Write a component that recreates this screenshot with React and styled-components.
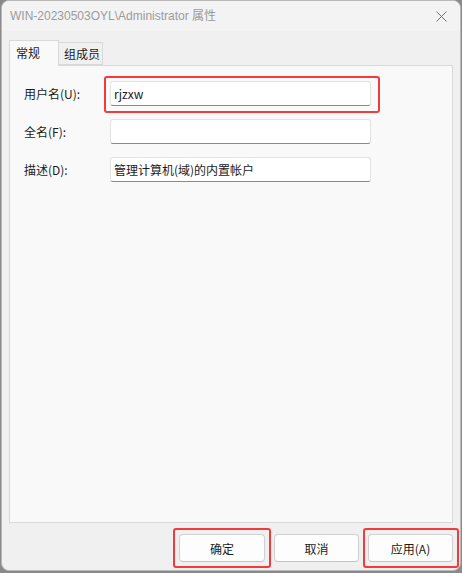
import React from 'react'
import styled, { createGlobalStyle } from 'styled-components'

const Global = createGlobalStyle`
  html, body {
    margin: 0;
    padding: 0;
    background: #8a8a8a;
  }
  body {
    font-family: "Noto Sans CJK SC", "Noto Sans", sans-serif;
    font-size: 12px;
    color: #1b1b1b;
  }
`

const Window = styled.div`
  box-sizing: border-box;
  width: 460px;
  height: 571px;
  margin-left: 1px;
  border: 1px solid #b9b9b9;
  border-radius: 8px;
  background: #f0f0f0;
  display: flex;
  flex-direction: column;
  overflow: hidden;
`

const TitleBar = styled.div`
  height: 30px;
  flex: none;
  display: flex;
  align-items: center;
  justify-content: space-between;
  padding: 0 9px 0 8px;
  background: #f3f3f3;
`

const Title = styled.span`
  color: #9b9b9b;
  font-family: "Liberation Sans", "Noto Sans CJK SC", sans-serif;
  font-size: 12px;
  line-height: 1;
`

const CloseBtn = styled.div`
  width: 20px;
  height: 20px;
  display: flex;
  align-items: center;
  justify-content: center;
`

const Body = styled.div`
  flex: 1;
  display: flex;
  flex-direction: column;
  padding: 9px 7px 0 7px;
`

const TabStrip = styled.div`
  display: flex;
  align-items: flex-end;
  height: 25px;
  flex: none;
  position: relative;
  z-index: 1;
`

const Tab = styled.div`
  box-sizing: border-box;
  width: ${p => p.$w}px;
  height: ${p => (p.$active ? 26 : 23)}px;
  margin-bottom: ${p => (p.$active ? -1 : 0)}px;
  padding-left: ${p => p.$pad}px;
  display: flex;
  align-items: center;
  border: 1px solid #d9d9d9;
  border-bottom: ${p => (p.$active ? 'none' : '1px solid #d9d9d9')};
  border-left: ${p => (p.$active ? '1px solid #d9d9d9' : 'none')};
  background: ${p => (p.$active ? '#f9f9f9' : '#f0f0f0')};
  color: #1b1b1b;
  padding-bottom: ${p => (p.$active ? 2 : 0)}px;
`

const Panel = styled.div`
  box-sizing: border-box;
  height: 458px;
  flex: none;
  background: #f9f9f9;
  border: 1px solid #d9d9d9;
  padding: 15px 0 0 14px;
  display: flex;
  flex-direction: column;
  gap: 13px;
`

const Row = styled.div`
  display: flex;
  align-items: center;
  height: 25px;
`

const Label = styled.label`
  width: 86px;
  flex: none;
  color: #1b1b1b;
`

const FieldWrap = styled.div`
  position: relative;
  width: 261px;
  height: 25px;
`

const Field = styled.div`
  box-sizing: border-box;
  width: 100%;
  height: 100%;
  background: #ffffff;
  border: 1px solid #e3e3e3;
  border-bottom: 1px solid #8a8a8a;
  border-radius: 3px;
  padding: 0 3px;
  display: flex;
  align-items: center;
  color: #1b1b1b;
`

const Mark = styled.div`
  position: absolute;
  top: ${p => p.$t}px;
  left: ${p => p.$l}px;
  right: ${p => p.$r}px;
  bottom: ${p => p.$b}px;
  border: 2px solid #f23b3b;
  border-radius: 3px;
  pointer-events: none;
`

const Footer = styled.div`
  flex: none;
  display: flex;
  justify-content: flex-end;
  gap: 9px;
  padding: 11px 0 8px 0;
`

const BtnWrap = styled.div`
  position: relative;
`

const Button = styled.button`
  box-sizing: border-box;
  width: ${p => p.$w}px;
  height: 28px;
  background: #fdfdfd;
  border: 1px solid #d0d0d0;
  border-bottom-color: #c4c4c4;
  border-radius: 4px;
  font-family: inherit;
  font-size: 12px;
  color: #1b1b1b;
  padding: 0;
`

const fields = [
  { label: '用户名(U):', value: 'rjzxw', mark: true },
  { label: '全名(F):', value: '' },
  { label: '描述(D):', value: '管理计算机(域)的内置帐户' },
]

export default function App() {
  return (
    <>
      <Global />
      <Window>
        <TitleBar>
          <Title>WIN-20230503OYL\Administrator 属性</Title>
          <CloseBtn>
            <svg width="11" height="11" viewBox="0 0 11 11">
              <path d="M0.5 0.5 L10.5 10.5 M10.5 0.5 L0.5 10.5" stroke="#6e6e6e" strokeWidth="1" fill="none" />
            </svg>
          </CloseBtn>
        </TitleBar>
        <Body>
          <TabStrip>
            <Tab $active $w={50} $pad={6}>常规</Tab>
            <Tab $w={44} $pad={5}>组成员</Tab>
          </TabStrip>
          <Panel>
            {fields.map(f => (
              <Row key={f.label}>
                <Label>{f.label}</Label>
                <FieldWrap>
                  <Field>{f.value}</Field>
                  {f.mark && <Mark $t={-5} $l={-6} $r={-9} $b={-7} />}
                </FieldWrap>
              </Row>
            ))}
          </Panel>
          <Footer>
            <BtnWrap>
              <Button $w={86}>确定</Button>
              <Mark $t={-6} $l={-6} $r={-6} $b={-6} />
            </BtnWrap>
            <BtnWrap>
              <Button $w={85}>取消</Button>
            </BtnWrap>
            <BtnWrap>
              <Button $w={85}>应用(A)</Button>
              <Mark $t={-6} $l={-5} $r={-6} $b={-6} />
            </BtnWrap>
          </Footer>
        </Body>
      </Window>
    </>
  )
}
